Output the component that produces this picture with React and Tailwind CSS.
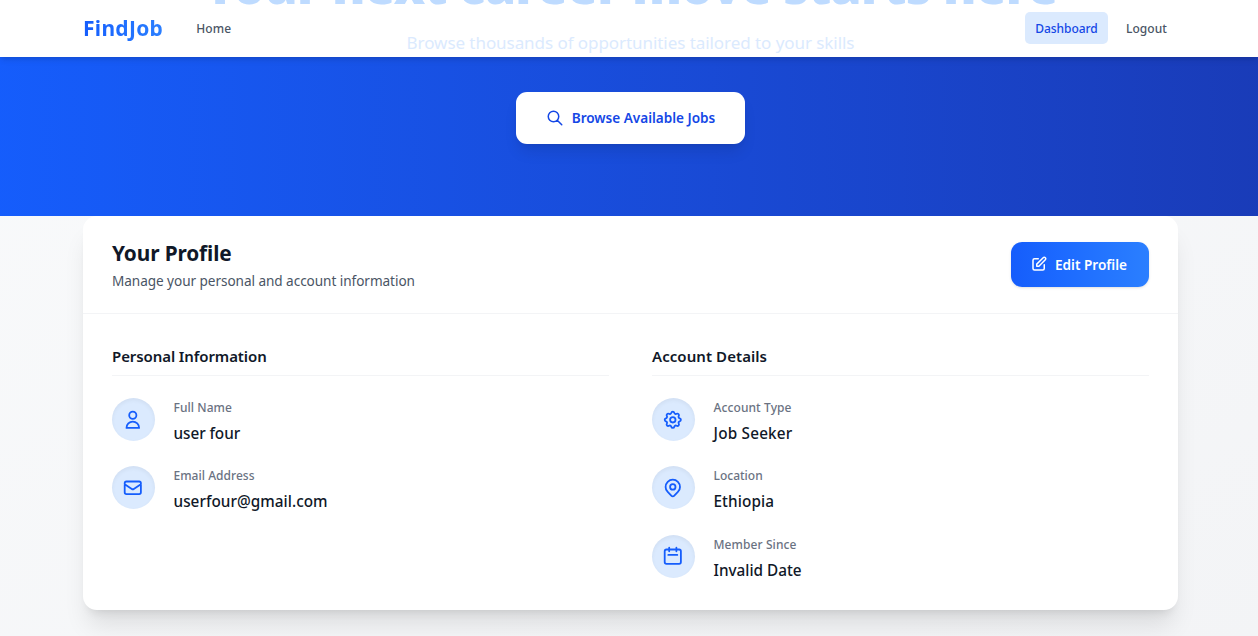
const ICONS = {
  search: ["M21 21l-6-6m2-5a7 7 0 11-14 0 7 7 0 0114 0z"],
  edit: [
    "M11 5H6a2 2 0 00-2 2v11a2 2 0 002 2h11a2 2 0 002-2v-5m-1.414-9.414a2 2 0 112.828 2.828L11.828 15H9v-2.828l8.586-8.586z",
  ],
  user: ["M16 7a4 4 0 11-8 0 4 4 0 018 0zM12 14a7 7 0 00-7 7h14a7 7 0 00-7-7z"],
  mail: [
    "M3 8l7.89 5.26a2 2 0 002.22 0L21 8M5 19h14a2 2 0 002-2V7a2 2 0 00-2-2H5a2 2 0 00-2 2v10a2 2 0 002 2z",
  ],
  cog: [
    "M10.325 4.317c.426-1.756 2.924-1.756 3.35 0a1.724 1.724 0 002.573 1.066c1.543-.94 3.31.826 2.37 2.37a1.724 1.724 0 001.065 2.572c1.756.426 1.756 2.924 0 3.35a1.724 1.724 0 00-1.066 2.573c.94 1.543-.826 3.31-2.37 2.37a1.724 1.724 0 00-2.572 1.065c-.426 1.756-2.924 1.756-3.35 0a1.724 1.724 0 00-2.573-1.066c-1.543.94-3.31-.826-2.37-2.37a1.724 1.724 0 00-1.065-2.572c-1.756-.426-1.756-2.924 0-3.35a1.724 1.724 0 001.066-2.573c-.94-1.543.826-3.31 2.37-2.37.996.608 2.296.07 2.572-1.065z",
    "M15 12a3 3 0 11-6 0 3 3 0 016 0z",
  ],
  pin: [
    "M17.657 16.657L13.414 20.9a1.998 1.998 0 01-2.827 0l-4.244-4.243a8 8 0 1111.314 0z",
    "M15 11a3 3 0 11-6 0 3 3 0 016 0z",
  ],
  calendar: ["M8 7V3m8 4V3m-9 8h10M5 21h14a2 2 0 002-2V7a2 2 0 00-2-2H5a2 2 0 00-2 2v12a2 2 0 002 2z"],
};

function Icon({ name, className }) {
  return (
    <svg
      viewBox="0 0 24 24"
      fill="none"
      stroke="currentColor"
      strokeWidth="2"
      strokeLinecap="round"
      strokeLinejoin="round"
      className={className}
    >
      {ICONS[name].map((d) => (
        <path key={d} d={d} />
      ))}
    </svg>
  );
}

function Navbar() {
  return (
    <header className="absolute inset-x-0 top-0 z-10 h-[57px] bg-white pb-px pl-[3px] shadow-md">
      <div className="mx-auto flex h-full w-[1095px] items-center text-[12px] font-medium text-gray-600">
        <a className="bg-gradient-to-r from-blue-600 to-blue-500 bg-clip-text text-[21px] leading-8 font-bold tracking-[0.3px] text-transparent">
          FindJob
        </a>
        <a className="ml-[33px] pt-[2px] tracking-[0.1px]">Home</a>
        <a className="ml-auto flex h-8 w-[83px] items-center justify-center rounded-[5px] bg-blue-100 pt-[2px] tracking-[-0.04px] text-blue-700">
          Dashboard
        </a>
        <a className="mr-[11px] ml-[18px] pt-[2px] tracking-[0.07px]">Logout</a>
      </div>
    </header>
  );
}

function Hero() {
  return (
    <section className="flex h-[216px] flex-col items-center justify-end overflow-hidden bg-gradient-to-r from-blue-600 to-blue-800 pb-[72px] pl-[3px] whitespace-nowrap">
      <h1 className="z-20 mb-[17px] text-[50px] leading-[54px] font-black tracking-[-0.8px] text-[#bedbff]">
        Your next career move starts here
      </h1>
      <p className="z-20 mb-[35px] text-[17px] leading-7 tracking-[-0.06px] text-blue-100">
        Browse thousands of opportunities tailored to your skills
      </p>
      <button className="flex h-[52px] w-[229px] shrink-0 items-center justify-center gap-2 rounded-[11px] bg-white text-[13.6px] font-semibold tracking-[-0.02px] text-blue-700 shadow-lg">
        <Icon name="search" className="size-[18px]" />
        Browse Available Jobs
      </button>
    </section>
  );
}

function Detail({ icon, label, value, labelClass, valueClass }) {
  return (
    <div className="flex h-[43px] items-center gap-[18.5px]">
      <div className="flex size-[43px] shrink-0 items-center justify-center rounded-full bg-blue-100 pr-px text-blue-600 inset-shadow-sm">
        <Icon name={icon} className="size-[21.6px]" />
      </div>
      <div className="pt-[5px]">
        <p className={`text-[12px] leading-[18px] font-medium text-gray-500 ${labelClass}`}>{label}</p>
        <p className={`mt-[4px] text-[15.3px] leading-[24px] font-medium text-gray-900 ${valueClass}`}>{value}</p>
      </div>
    </div>
  );
}

function Column({ title, titleClass, children }) {
  return (
    <div className="flex flex-col">
      <h3
        className={`mb-[22px] h-[34px] border-b border-gray-100 text-[15px] leading-[28px] font-semibold text-gray-900 ${titleClass}`}
      >
        {title}
      </h3>
      <div className="flex flex-col gap-[25.4px]">{children}</div>
    </div>
  );
}

function ProfileCard() {
  return (
    <main className="mx-auto h-[394px] w-[1095px] rounded-[14px] bg-white shadow-xl">
      <div className="flex h-[98px] items-center justify-between border-b border-gray-100 px-[29px]">
        <div>
          <h2 className="pt-px text-[20.8px] leading-[29px] font-bold tracking-[-0.11px] text-gray-900">Your Profile</h2>
          <p className="mt-[2px] text-[13.6px] leading-[22px] tracking-[-0.06px] text-gray-600">
            Manage your personal and account information
          </p>
        </div>
        <button className="flex h-[45px] w-[138px] items-center justify-center gap-[7px] rounded-[11px] bg-gradient-to-r from-blue-600 to-blue-500 pr-[3px] text-[13.6px] font-semibold text-white shadow-sm">
          <Icon name="edit" className="mb-px size-[18px]" />
          <span className="pt-px">Edit Profile</span>
        </button>
      </div>
      <div className="grid grid-cols-2 gap-[43px] px-[29px] pt-[28px]">
        <Column title="Personal Information" titleClass="tracking-[-0.09px]">
          <Detail icon="user" label="Full Name" value="user four" labelClass="tracking-[0.06px]" valueClass="tracking-[-0.06px]" />
          <Detail icon="mail" label="Email Address" value="userfour@gmail.com" labelClass="tracking-[0.03px]" valueClass="tracking-[0.04px]" />
        </Column>
        <Column title="Account Details" titleClass="tracking-[0.07px]">
          <Detail icon="cog" label="Account Type" value="Job Seeker" labelClass="tracking-[0.1px]" valueClass="tracking-[0.2px]" />
          <Detail icon="pin" label="Location" value="Ethiopia" labelClass="tracking-[0px]" valueClass="tracking-[0.09px]" />
          <Detail icon="calendar" label="Member Since" value="Invalid Date" labelClass="tracking-[0.09px]" valueClass="tracking-[0px]" />
        </Column>
      </div>
    </main>
  );
}

export default function App() {
  return (
    <div className="relative h-[636px] overflow-hidden bg-gradient-to-br from-gray-50 to-gray-100 font-['Noto_Sans','Open_Sans',sans-serif]">
      <Navbar />
      <Hero />
      <div className="pl-[3px]">
        <ProfileCard />
      </div>
    </div>
  );
}
